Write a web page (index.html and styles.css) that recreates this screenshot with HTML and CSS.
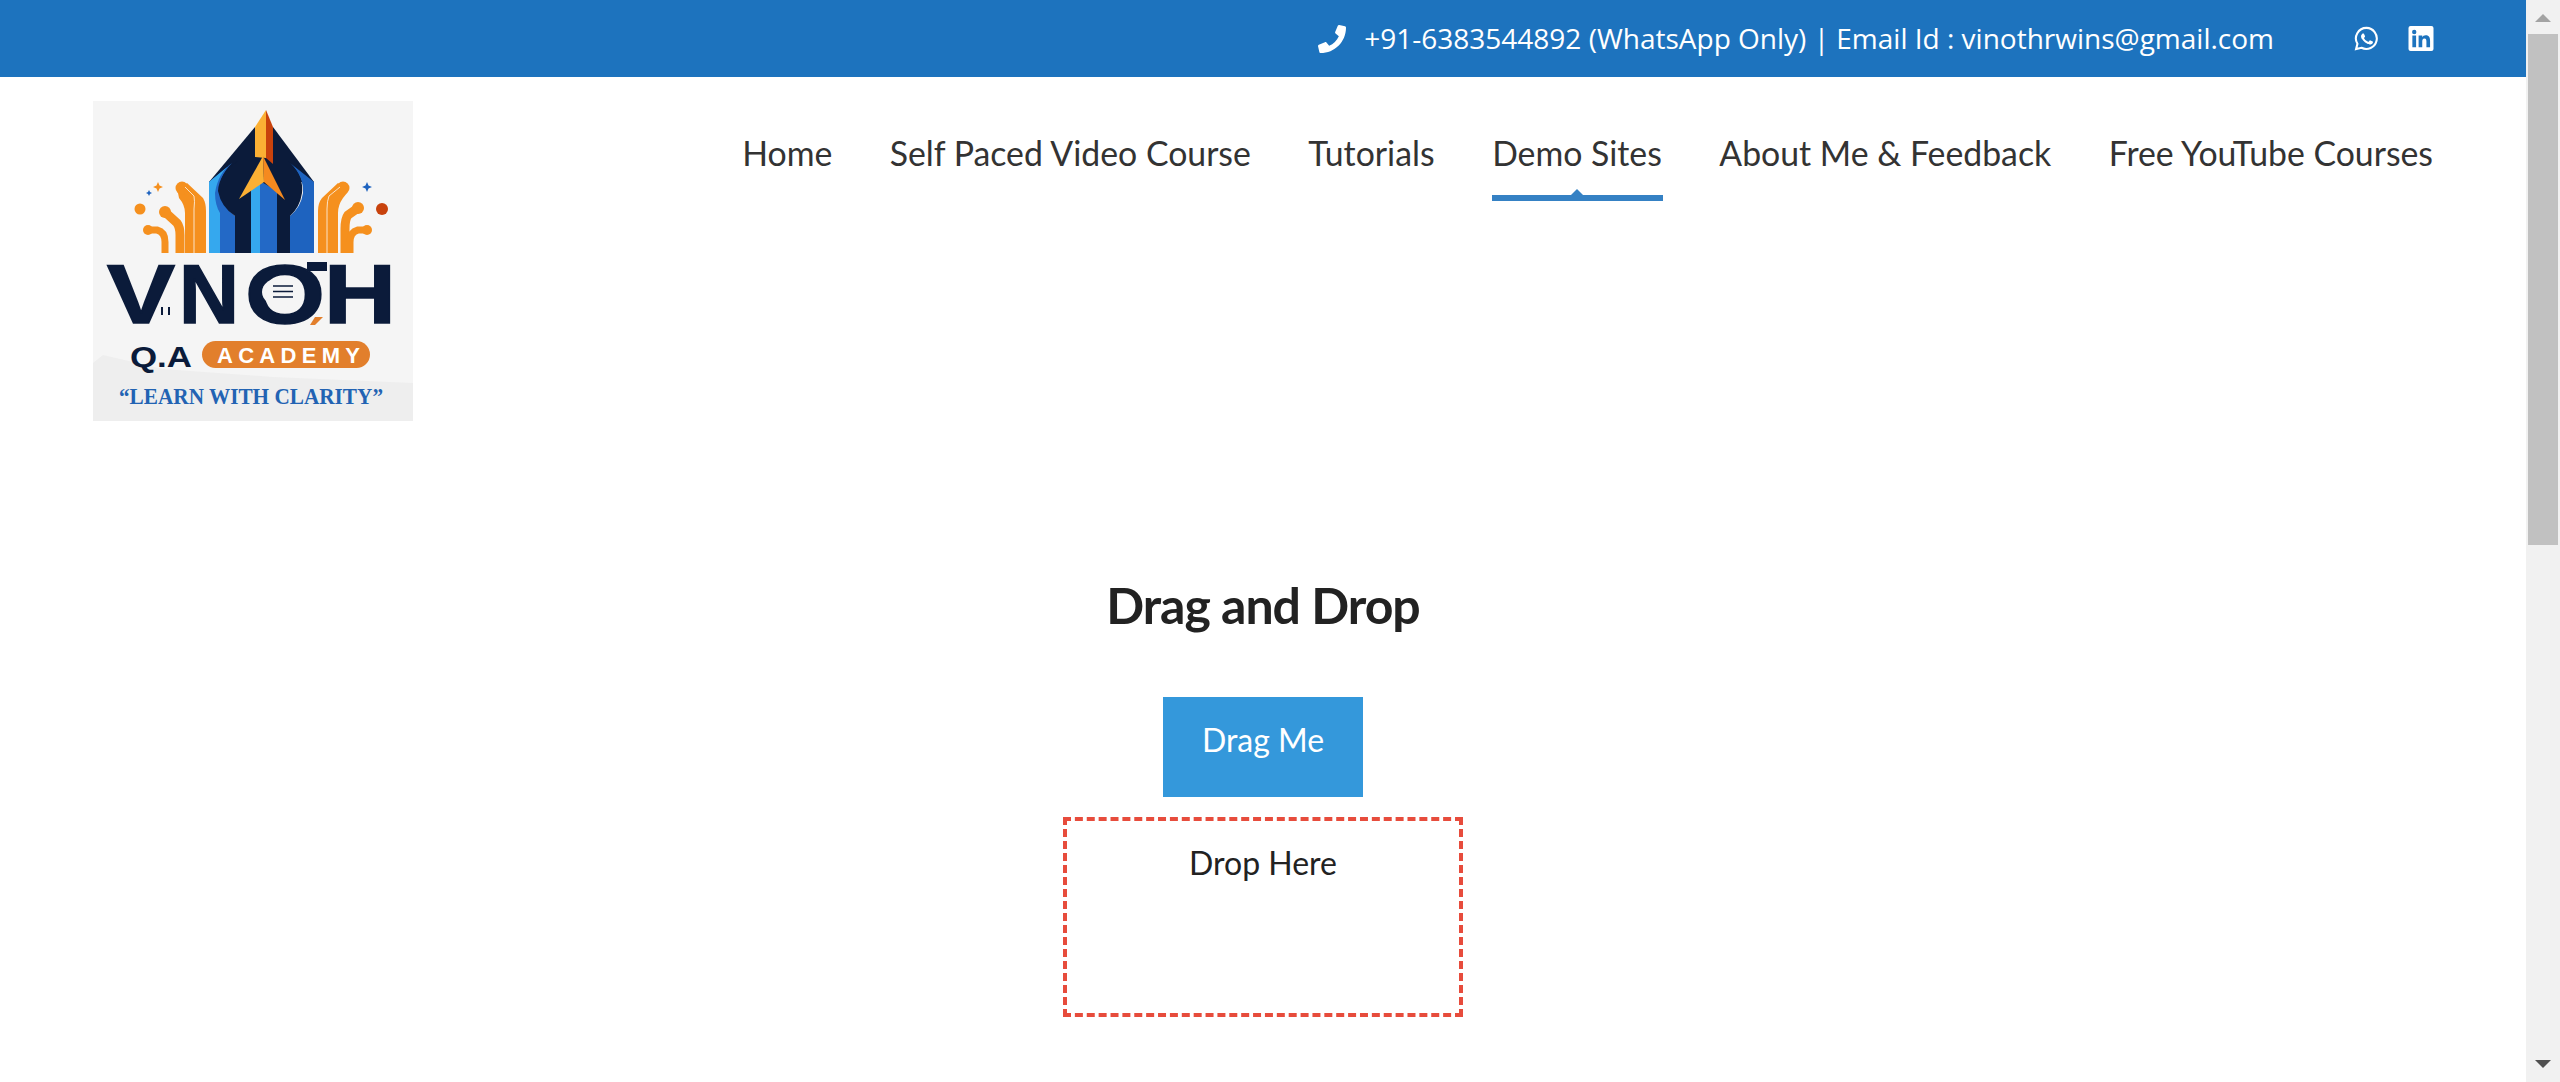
FILE: index.html
```html
<!DOCTYPE html>
<html lang="en">

<head>
    <meta charset="UTF-8">
    <meta name="viewport" content="width=device-width, initial-scale=1.0">
    <title>Drag and Drop</title>
    <link rel="stylesheet" href="styles.css">
</head>

<body>
    <div class="page">
        <div class="topbar">
            <svg class="phone" viewBox="0 0 512 512">
                <path d="M493.4 24.6l-104-24c-11.3-2.6-22.900 3.300-27.500 13.900l-48 112c-4.200 9.800-1.400 21.300 6.900 28l60.600 49.600c-36 76.700-98.900 140.500-177.200 177.200l-49.600-60.600c-6.800-8.300-18.200-11.100-28-6.900l-112 48C3.900 366.500-2 378.100.6 389.400l24 104C27.100 504.200 36.700 512 48 512c256.100 0 464-207.500 464-464 0-11.200-7.700-20.900-18.600-23.400z" />
            </svg>
            <span class="contact">+91-6383544892 (WhatsApp Only) | Email Id : vinothrwins@gmail.com</span>
            <div class="social">
                <svg class="whatsapp" viewBox="0 0 24 24">
                    <path d="M12 1.800a10.100 10.100 0 0 0-8.700 15.300L2 22.200l5.200-1.300A10.100 10.100 0 1 0 12 1.800z" fill="none" stroke="#fff" stroke-width="2" />
                    <path d="M8.700 6.800c-.3 0-.8.100-1.200.6-.4.500-1.200 1.300-1.200 2.900s1.200 3.200 1.400 3.400c.2.200 2.400 3.800 5.900 5.100 2.900 1.100 3.500.9 4.100.8.600-.1 2-.8 2.300-1.600.3-.8.300-1.500.2-1.600-.1-.1-.3-.2-.7-.4l-2.300-1.100c-.3-.1-.6-.2-.8.200l-1.100 1.300c-.2.200-.4.300-.8.100-.4-.2-1.500-.6-2.800-1.700-1-.9-1.700-2-1.900-2.400-.2-.4 0-.5.200-.7l.9-1.200c.1-.2.100-.4 0-.6L9.800 7.400c-.3-.6-.6-.6-.8-.6z" transform="translate(1.600 1.600) scale(.82)" />
                </svg>
                <svg class="linkedin" viewBox="0 0 24 24">
                    <path fill-rule="evenodd" d="M2 0h20a2 2 0 0 1 2 2v20a2 2 0 0 1-2 2H2a2 2 0 0 1-2-2V2a2 2 0 0 1 2-2zm1.700 9.200V20.400h3.600V9.200zM5.500 3.600a2.100 2.100 0 1 0 0 4.200 2.100 2.100 0 0 0 0-4.200zM9.700 9.200V20.400h3.500v-5.600c0-1.500.3-2.900 2.100-2.900s1.900 1.700 1.900 3v5.500h3.500v-6.100c0-3-.7-5.400-4.200-5.400-1.700 0-2.800.9-3.300 1.800V9.200z" />
                </svg>
            </div>
        </div>

        <header class="header">
            <svg class="logo" viewBox="0 0 320 320">
                <rect width="320" height="320" fill="#f5f5f5" />
                <path d="M0 262 L10 254 L70 268 L180 276 L320 282 L320 320 L0 320z" fill="#eeeeee" />

                <!-- pen -->
                <path d="M162 26 L116 81 L221 81 L180 26z" fill="#0b1b3a" />
                <path d="M116 152 V81 L139 62 Q125 76 127 92 Q130 106 142 115 V152z" fill="#2369c6" />
                <path d="M116 152 V81 L139 62 Q125 72 122 92 Q122 104 127 112 V152z" fill="#35a8ee" />
                <path d="M221 152 V81 L197 62 Q211 76 210 92 Q208 106 197 115 V152z" fill="#1e63bf" />
                <path d="M125 90 Q126 72 145 60 L195 60 Q211 74 209 92 Q207 106 197 115 V152 H142 V115 Q128 106 125 90z" fill="#0b1b3a" />
                <path d="M158 152 V84 L167 80 V152z" fill="#35a8ee" />
                <path d="M167 152 V80 L184 90 V152z" fill="#2369c6" />

                <!-- pen tip -->
                <path d="M173 9 L162 26 V56 L173 57z" fill="#fbb034" />
                <path d="M173 9 L180 26 V63 L173 57z" fill="#c8420c" />
                <path d="M146 98 L170 55 L171 81z" fill="#fbb034" />
                <path d="M170 55 L192 99 L171 81z" fill="#f58a1f" />

                <!-- circuit lines -->
                <g fill="#f5901e">
                    <path d="M85 92 L94 82 L110 97 Q113 102 113 110 V152 H92 V112 Q92 104 86 97z" />
                    <path d="M254 92 L245 82 L229 97 Q225 102 225 110 V152 H245 V112 Q245 104 250 97z" />
                    <circle cx="89" cy="87" r="6.500" />
                    <circle cx="250" cy="87" r="6.500" />
                    <circle cx="72" cy="111" r="6" />
                    <circle cx="265" cy="107" r="6" />
                    <circle cx="55" cy="129" r="5" />
                    <circle cx="274" cy="129" r="5" />
                </g>
                <g fill="none" stroke="#f5901e">
                    <path d="M72 111 L84 122 Q87 126 87 134 V152" stroke-width="9" />
                    <path d="M55 129 H64 Q72 131 72 141 V152" stroke-width="7" />
                    <path d="M265 107 L255 114 Q252 118 252 128 V152" stroke-width="9" />
                    <path d="M274 129 H265 Q257 131 257 141 V152" stroke-width="7" />
                </g>
                <g fill="none" stroke="#fbe3c6" stroke-width="1">
                    <path d="M92 86 L101 95 Q102 100 101 108 V152" />
                    <path d="M247 86 L236 95 Q234 100 234 108 V152" />
                </g>
                <circle cx="47" cy="108" r="5.500" fill="#f5901e" />
                <circle cx="289" cy="108" r="6" fill="#c8420c" />
                <path d="M65 81 L66.500 84.500 L70 86 L66.500 87.500 L65 91 L63.500 87.500 L60 86 L63.500 84.500z" fill="#f5901e" />
                <path d="M56 89 L57 91 L59 92 L57 93 L56 95 L55 93 L53 92 L55 91z" fill="#1e63bf" />
                <path d="M274 81 L275.500 84.500 L279 86 L275.500 87.500 L274 91 L272.500 87.500 L269 86 L272.500 84.500z" fill="#1e63bf" />

                <!-- wordmark -->
                <text class="logo-name" x="14" y="222" textLength="68" lengthAdjust="spacingAndGlyphs">V</text>
                <text class="logo-name" x="86" y="222" textLength="60" lengthAdjust="spacingAndGlyphs">N</text>
                <text class="logo-name" x="152" y="222" textLength="80" lengthAdjust="spacingAndGlyphs">O</text>
                <text class="logo-name" x="231" y="222" textLength="72" lengthAdjust="spacingAndGlyphs">H</text>
                <rect x="214" y="161" width="20" height="9" fill="#0b1b3a" />
                <ellipse cx="189" cy="191" rx="20" ry="15" fill="#f5f5f5" />
                <path d="M180 185 H200 M180 190.500 H200 M180 196 H200" stroke="#0b1b3a" stroke-width="1.500" />
                <path d="M69 206 V214 M76 206 V214" stroke="#0b1b3a" stroke-width="2" />
                <path d="M222 216 L230 216 L222 224 L217 224z" fill="#e27f2c" />
                <text class="logo-qa" x="37" y="266" textLength="62" lengthAdjust="spacingAndGlyphs">Q.A</text>
                <rect x="109" y="240" width="168" height="27" rx="13.500" fill="#e27f2c" />
                <text class="logo-academy" x="124" y="262" textLength="143">ACADEMY</text>
                <text class="logo-tag" x="26" y="303" textLength="264" lengthAdjust="spacingAndGlyphs">“LEARN WITH CLARITY”</text>
            </svg>

            <nav class="nav">
                <a href="#">Home</a>
                <a href="#">Self Paced Video Course</a>
                <a href="#">Tutorials</a>
                <a href="#" class="active">Demo Sites</a>
                <a href="#">About Me &amp; Feedback</a>
                <a href="#">Free YouTube Courses</a>
            </nav>
        </header>

        <main class="main">
            <h1 class="title">Drag and Drop</h1>
            <div class="drag">Drag Me</div>
            <div class="drop">Drop Here</div>
        </main>
    </div>

    <div class="scrollbar">
        <div class="arrow-up"></div>
        <div class="thumb"></div>
        <div class="arrow-down"></div>
    </div>
</body>

</html>
```
FILE: styles.css
```css
html,
body {
    height: 100%;
}

body {
    margin: 0;
    display: flex;
    overflow: hidden;
    background-color: white;
    font-family: "Lato", "Liberation Sans", sans-serif;
    color: #222;
}

.page {
    flex: 1;
    min-width: 0;
}

/* top bar */
.topbar {
    display: flex;
    justify-content: flex-end;
    align-items: center;
    height: 77px;
    padding-right: 92px;
    background-color: #1d73be;
    color: white;
    font-family: "Open Sans", "Liberation Sans", sans-serif;
    font-size: 28px;
}

.phone {
    width: 28px;
    height: 28px;
    margin-right: 18px;
    fill: white;
}

.contact {
    padding-bottom: 2px;
}

.social {
    display: flex;
    align-items: center;
    gap: 29px;
    margin-left: 80px;
}

.whatsapp {
    width: 25px;
    height: 25px;
    fill: white;
}

.linkedin {
    width: 26px;
    height: 25px;
    fill: white;
}

/* logo + menu */
.header {
    display: flex;
    justify-content: space-between;
    padding: 24px 92px 0 93px;
}

.logo {
    width: 320px;
    height: 320px;
}

.logo-name {
    font-family: "Liberation Sans", sans-serif;
    font-size: 84px;
    font-weight: bold;
    fill: #0b1b3a;
    stroke: #0b1b3a;
    stroke-width: 1.5px;
}

.logo-qa {
    font-family: "Liberation Sans", sans-serif;
    font-size: 29px;
    font-weight: bold;
    fill: #0b1b3a;
}

.logo-academy {
    font-family: "Liberation Sans", sans-serif;
    font-size: 22px;
    font-weight: bold;
    fill: white;
}

.logo-tag {
    font-family: "Liberation Serif", serif;
    font-size: 24px;
    font-weight: bold;
    fill: #2263b3;
}

.nav {
    display: flex;
    align-items: flex-start;
    gap: 56.5px;
    font-size: 33.8px;
}

.nav a {
    position: relative;
    display: block;
    padding: 32px 1px 22px 0;
    border-bottom: 6px solid transparent;
    color: #333;
    text-decoration: none;
}

.nav a.active {
    border-bottom-color: #3581c4;
}

/* small tip on the active line */
.nav a.active::after {
    content: "";
    position: absolute;
    left: 50%;
    bottom: 0;
    margin-left: -6px;
    border-left: 6px solid transparent;
    border-right: 6px solid transparent;
    border-bottom: 6px solid #3581c4;
}

/* content */
.main {
    display: flex;
    flex-direction: column;
    align-items: center;
    padding-top: 155px;
}

.title {
    margin: 0 0 63px;
    font-size: 50px;
    line-height: 58px;
    font-weight: bold;
    letter-spacing: -1px;
    color: #222;
}

.drag {
    width: 200px;
    height: 100px;
    padding-top: 23px;
    box-sizing: border-box;
    margin-bottom: 20px;
    background-color: #3498db;
    color: white;
    text-align: center;
    font-size: 32px;
    line-height: 40px;
}

.drop {
    width: 400px;
    height: 200px;
    padding-top: 22px;
    box-sizing: border-box;
    border: 4px dashed #e74c3c;
    text-align: center;
    font-size: 32px;
    line-height: 40px;
}

/* fake browser scrollbar */
.scrollbar {
    position: relative;
    width: 34px;
    background-color: #f1f1f1;
}

.thumb {
    height: 511px;
    margin: 34px 2px 0;
    background-color: #c1c1c1;
}

.arrow-up {
    position: absolute;
    top: 14px;
    left: 9px;
    border-left: 8px solid transparent;
    border-right: 8px solid transparent;
    border-bottom: 8px solid #a3a3a3;
}

.arrow-down {
    position: absolute;
    bottom: 14px;
    left: 9px;
    border-left: 8px solid transparent;
    border-right: 8px solid transparent;
    border-top: 8px solid #505050;
}
```
